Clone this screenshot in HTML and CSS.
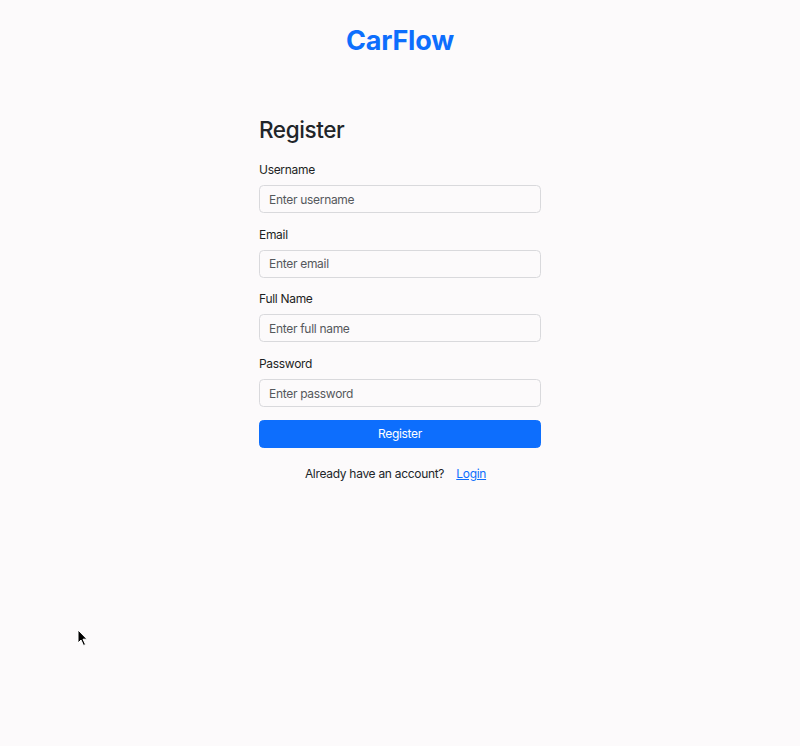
FILE: index.html
```html
<!DOCTYPE html>
<html lang="en">
<head>
<meta charset="utf-8">
<title>CarFlow - Register</title>
<link rel="stylesheet" href="styles.css">
</head>
<body>
<header class="brand-bar">
  <h1 class="brand">CarFlow</h1>
</header>
<main class="auth">
  <h2 class="auth-title">Register</h2>
  <form class="auth-form">
    <div class="field">
      <label class="field-label" for="u">Username</label>
      <input class="field-input" id="u" type="text" placeholder="Enter username">
    </div>
    <div class="field">
      <label class="field-label" for="e">Email</label>
      <input class="field-input" id="e" type="email" placeholder="Enter email">
    </div>
    <div class="field">
      <label class="field-label" for="f">Full Name</label>
      <input class="field-input" id="f" type="text" placeholder="Enter full name">
    </div>
    <div class="field">
      <label class="field-label" for="p">Password</label>
      <input class="field-input" id="p" type="password" placeholder="Enter password">
    </div>
    <button class="btn-primary" type="button">Register</button>
  </form>
  <p class="auth-switch">Already have an account? <a class="btn-link" href="#">Login</a></p>
</main>
<svg class="cursor" width="12" height="18" viewBox="0 0 12 18"><path d="M1 1 L1 14 L4 11 L6.5 16.5 L8.5 15.5 L6 10.2 L10 10.2 Z" fill="#000" stroke="#fff" stroke-width="1"/></svg>
</body>
</html>
```
FILE: styles.css
```css
html, body {
  margin: 0;
  padding: 0;
}
body {
  background: #fcfafb;
  font-family: Inter, "Noto Sans", "Liberation Sans", sans-serif;
  color: #212529;
  min-height: 746px;
  position: relative;
}
.brand-bar {
  height: 80px;
  display: flex;
  align-items: center;
  justify-content: center;
}
.brand {
  margin: 0;
  font-size: 27px;
  font-weight: 700;
  color: #0d6efd;
  letter-spacing: -0.2px;
  line-height: 1;
  padding-top: 1px;
}
.auth {
  width: 282px;
  margin: 35px auto 0;
}
.auth-title {
  margin: 0 0 16px;
  font-size: 22.5px;
  font-weight: 500;
  letter-spacing: -0.4px;
  line-height: 30px;
}
.auth-form {
  display: flex;
  flex-direction: column;
}
.field {
  display: flex;
  flex-direction: column;
  margin-bottom: 12.7px;
}
.field-label {
  font-size: 12px;
  letter-spacing: -0.3px;
  line-height: 18px;
  margin-bottom: 6px;
  color: #1c1f23;
}
.field-input {
  box-sizing: border-box;
  height: 28px;
  padding: 0 9px;
  font: inherit;
  font-size: 12px;
  letter-spacing: -0.3px;
  border: 1px solid #d9d9dc;
  border-radius: 4.5px;
  background: #fcfafb;
  color: #212529;
}
.field-input::placeholder {
  color: #55585c;
}
.btn-primary {
  height: 28px;
  border: 1px solid #0d6efd;
  background: #0d6efd;
  color: #fff;
  font: inherit;
  font-size: 12px;
  letter-spacing: -0.3px;
  border-radius: 4.5px;
  padding: 0;
}
.auth-switch {
  margin: 17px 0 0;
  text-align: center;
  font-size: 12px;
  letter-spacing: -0.3px;
  line-height: 18px;
}
.btn-link {
  color: #0d6efd;
  text-decoration: underline;
  padding: 0 9px;
}
.cursor {
  position: absolute;
  left: 77px;
  top: 629px;
}
```
